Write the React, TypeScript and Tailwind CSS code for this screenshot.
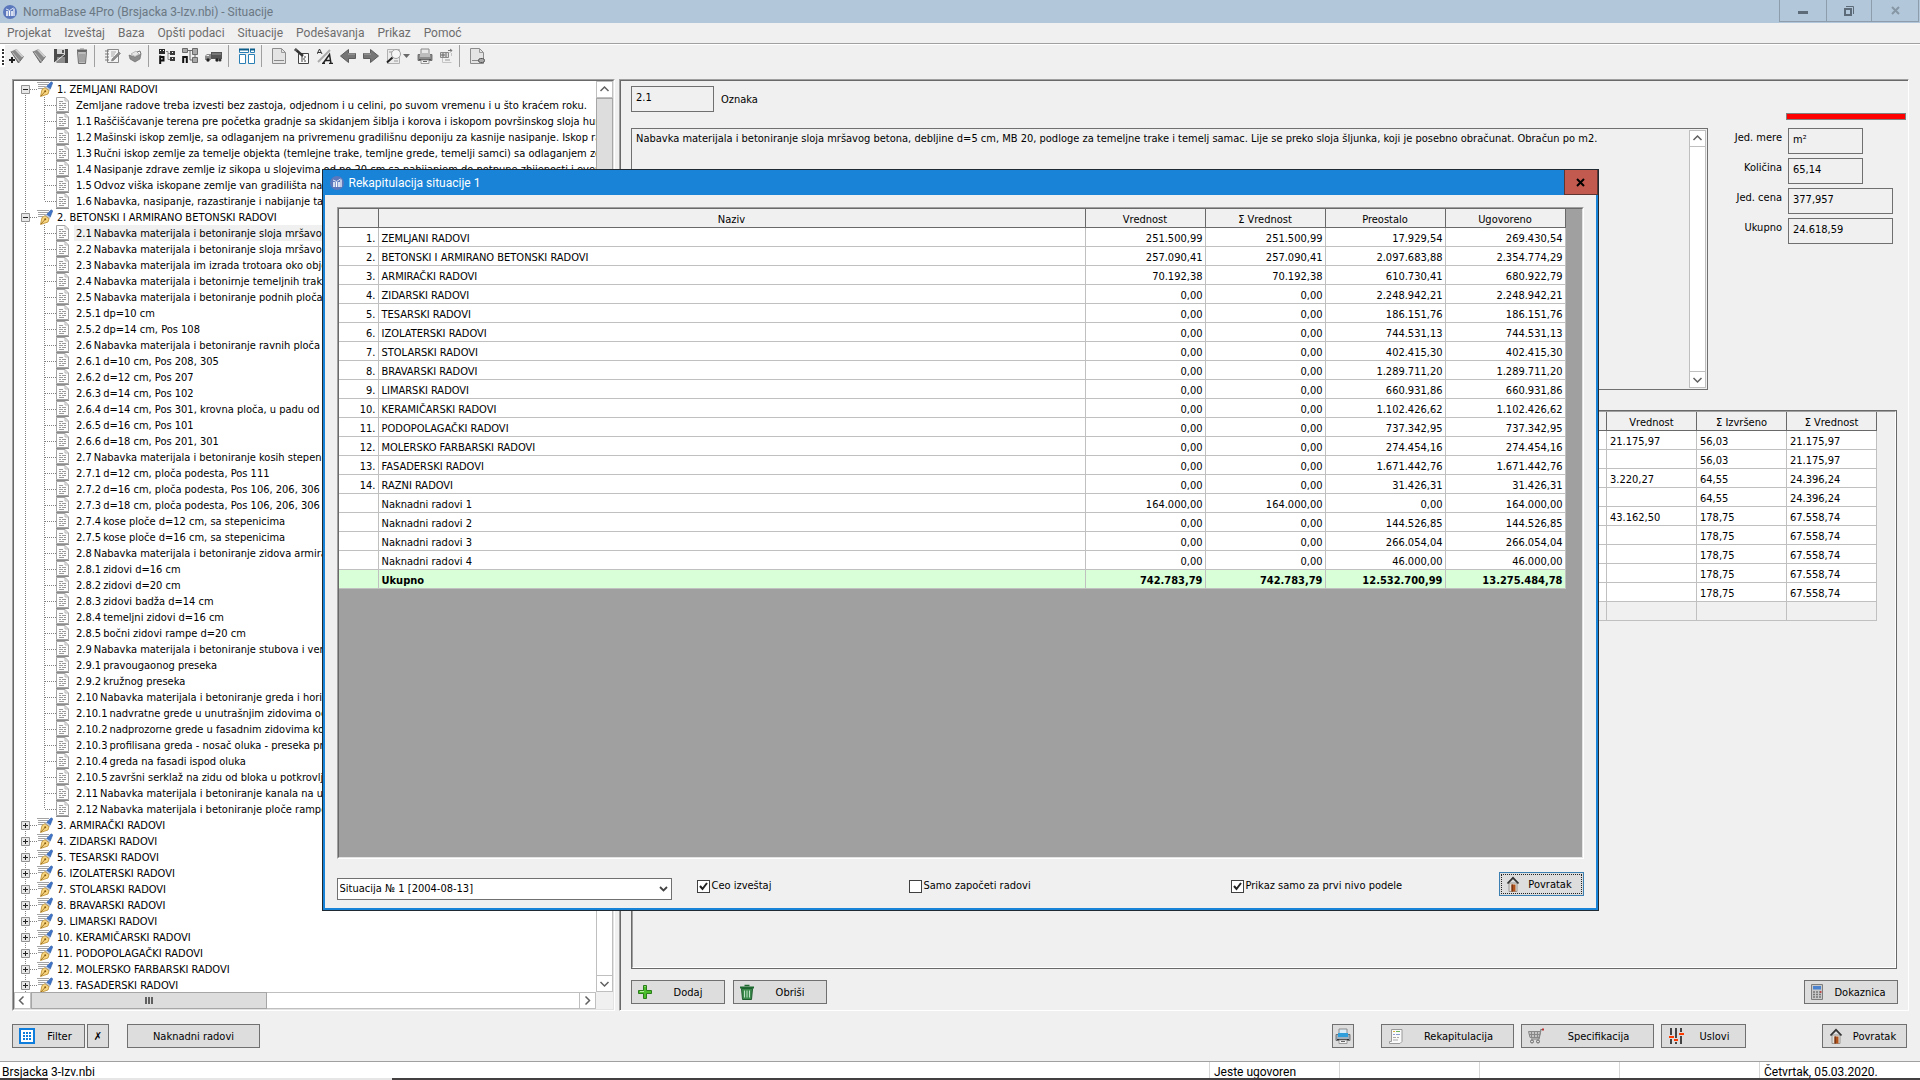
import type { ReactNode } from "react";
import clsx from "clsx";

type TreeBranch = {
  label: string;
  items?: string[];
};

const MENU = ["Projekat", "Izveštaj", "Baza", "Opšti podaci", "Situacije", "Podešavanja", "Prikaz", "Pomoć"];

const SELECTED = "2.1 Nabavka materijala i betoniranje sloja mršavog betona";

const TREE: TreeBranch[] = [
  {
    label: "1. ZEMLJANI RADOVI",
    items: [
      "Zemljane radove treba izvesti bez zastoja, odjednom i u celini, po suvom vremenu i u što kraćem roku.",
      "1.1 Raščišćavanje terena pre početka gradnje sa skidanjem šiblja i korova i iskopom površinskog sloja humusa",
      "1.2 Mašinski iskop zemlje, sa odlaganjem na privremenu gradilišnu deponiju za kasnije nasipanje. Iskop raditi do",
      "1.3 Ručni iskop zemlje za temelje objekta (temlejne trake, temljne grede, temelji samci) sa odlaganjem zemlje",
      "1.4 Nasipanje zdrave zemlje iz sikopa u slojevima od po 20 cm sa nabijanjem do potpune zbijenosti i eventula",
      "1.5 Odvoz viška iskopane zemlje van gradilišta na g",
      "1.6 Nabavka, nasipanje, razastiranje i nabijanje tam",
    ],
  },
  {
    label: "2. BETONSKI I ARMIRANO BETONSKI RADOVI",
    items: [
      SELECTED,
      "2.2 Nabavka materijala i betoniranje sloja mršavog b",
      "2.3 Nabavka materijala im izrada trotoara oko objek",
      "2.4 Nabavka materijala i betonirnje temeljnih traka,",
      "2.5 Nabavka materijala i betoniranje podnih ploča n",
      "2.5.1 dp=10 cm",
      "2.5.2 dp=14 cm, Pos 108",
      "2.6 Nabavka materijala i betoniranje ravnih ploča ar",
      "2.6.1 d=10 cm, Pos 208, 305",
      "2.6.2 d=12 cm, Pos 207",
      "2.6.3 d=14 cm, Pos 102",
      "2.6.4 d=14 cm, Pos 301, krovna ploča, u padu od 1",
      "2.6.5 d=16 cm, Pos 101",
      "2.6.6 d=18 cm, Pos 201, 301",
      "2.7 Nabavka materijala i betoniranje kosih stepenišn",
      "2.7.1 d=12 cm, ploča podesta, Pos 111",
      "2.7.2 d=16 cm, ploča podesta, Pos 106, 206, 306",
      "2.7.3 d=18 cm, ploča podesta, Pos 106, 206, 306",
      "2.7.4 kose ploče d=12 cm, sa stepenicima",
      "2.7.5 kose ploče d=16 cm, sa stepenicima",
      "2.8 Nabavka materijala i betoniranje zidova armiran",
      "2.8.1 zidovi d=16 cm",
      "2.8.2 zidovi d=20 cm",
      "2.8.3 zidovi badža d=14 cm",
      "2.8.4 temeljni zidovi d=16 cm",
      "2.8.5 bočni zidovi rampe d=20 cm",
      "2.9 Nabavka materijala i betoniranje stubova i verti",
      "2.9.1 pravougaonog preseka",
      "2.9.2 kružnog preseka",
      "2.10 Nabavka materijala i betoniranje greda i horizo",
      "2.10.1 nadvratne grede u unutrašnjim zidovima od",
      "2.10.2 nadprozorne grede u fasadnim zidovima koje",
      "2.10.3 profilisana greda - nosač oluka - preseka pre",
      "2.10.4 greda na fasadi ispod oluka",
      "2.10.5 završni serklaž na zidu od bloka u potkrovlju",
      "2.11 Nabavka materijala i betoniranje kanala na ula",
      "2.12 Nabavka materijala i betoniranje ploče rampe a",
    ],
  },
  { label: "3. ARMIRAČKI RADOVI" },
  { label: "4. ZIDARSKI RADOVI" },
  { label: "5. TESARSKI RADOVI" },
  { label: "6. IZOLATERSKI RADOVI" },
  { label: "7. STOLARSKI RADOVI" },
  { label: "8. BRAVARSKI RADOVI" },
  { label: "9. LIMARSKI RADOVI" },
  { label: "10. KERAMIČARSKI RADOVI" },
  { label: "11. PODOPOLAGAČKI RADOVI" },
  { label: "12. MOLERSKO FARBARSKI RADOVI" },
  { label: "13. FASADERSKI RADOVI" },
];

const RECAP_ROWS = [
  ["1.", "ZEMLJANI RADOVI", "251.500,99", "251.500,99", "17.929,54", "269.430,54"],
  ["2.", "BETONSKI I ARMIRANO BETONSKI RADOVI", "257.090,41", "257.090,41", "2.097.683,88", "2.354.774,29"],
  ["3.", "ARMIRAČKI RADOVI", "70.192,38", "70.192,38", "610.730,41", "680.922,79"],
  ["4.", "ZIDARSKI RADOVI", "0,00", "0,00", "2.248.942,21", "2.248.942,21"],
  ["5.", "TESARSKI RADOVI", "0,00", "0,00", "186.151,76", "186.151,76"],
  ["6.", "IZOLATERSKI RADOVI", "0,00", "0,00", "744.531,13", "744.531,13"],
  ["7.", "STOLARSKI RADOVI", "0,00", "0,00", "402.415,30", "402.415,30"],
  ["8.", "BRAVARSKI RADOVI", "0,00", "0,00", "1.289.711,20", "1.289.711,20"],
  ["9.", "LIMARSKI RADOVI", "0,00", "0,00", "660.931,86", "660.931,86"],
  ["10.", "KERAMIČARSKI RADOVI", "0,00", "0,00", "1.102.426,62", "1.102.426,62"],
  ["11.", "PODOPOLAGAČKI RADOVI", "0,00", "0,00", "737.342,95", "737.342,95"],
  ["12.", "MOLERSKO FARBARSKI RADOVI", "0,00", "0,00", "274.454,16", "274.454,16"],
  ["13.", "FASADERSKI RADOVI", "0,00", "0,00", "1.671.442,76", "1.671.442,76"],
  ["14.", "RAZNI RADOVI", "0,00", "0,00", "31.426,31", "31.426,31"],
  ["", "Naknadni radovi 1", "164.000,00", "164.000,00", "0,00", "164.000,00"],
  ["", "Naknadni radovi 2", "0,00", "0,00", "144.526,85", "144.526,85"],
  ["", "Naknadni radovi 3", "0,00", "0,00", "266.054,04", "266.054,04"],
  ["", "Naknadni radovi 4", "0,00", "0,00", "46.000,00", "46.000,00"],
];

const RECAP_TOTAL = ["", "Ukupno", "742.783,79", "742.783,79", "12.532.700,99", "13.275.484,78"];

const DETAIL_ROWS = [
  ["21.175,97", "56,03", "21.175,97"],
  ["", "56,03", "21.175,97"],
  ["3.220,27", "64,55", "24.396,24"],
  ["", "64,55", "24.396,24"],
  ["43.162,50", "178,75", "67.558,74"],
  ["", "178,75", "67.558,74"],
  ["", "178,75", "67.558,74"],
  ["", "178,75", "67.558,74"],
  ["", "178,75", "67.558,74"],
  ["", "", ""],
];

const UI_FONT = "font-['DejaVu_Sans_Condensed','Noto_Sans',sans-serif]";
const TITLE_FONT = "font-['Roboto','Open_Sans',sans-serif]";
const SUNKEN =
  "border border-t-[#a0a0a0] border-l-[#a0a0a0] border-r-white border-b-white";
const SUNKEN_INNER =
  "border border-t-[#696969] border-l-[#696969] border-r-[#e3e3e3] border-b-[#e3e3e3]";
const HEAD_CELL = "border-r border-b border-[#696969] p-0 pt-[3px] leading-[15px] font-normal";
const BODY_CELL = "border-r border-b border-[#c0c0c0] p-0 pt-[3px] pr-0.5 pl-[3px] leading-[15px]";

/* ---------- icons ---------- */

function Svg({ w = 16, h = 16, children }: { w?: number; h?: number; children: ReactNode }) {
  return (
    <svg width={w} height={h} viewBox={`0 0 ${w} ${h}`} fill="none" className="block shrink-0" aria-hidden="true">
      {children}
    </svg>
  );
}

function AppIcon() {
  return (
    <Svg w={14} h={14}>
      <circle cx="7" cy="7" r="7" fill="#5b78bd" />
      <path d="M4 11V6M6.500 11V6M9 11V6" stroke="#fff" strokeWidth="1.500" />
      <path d="M11 11V3.500" stroke="#fff" strokeWidth="1.200" />
      <path d="M3 4l3.500 1.500 4-2.500" stroke="#dfe6f5" />
    </Svg>
  );
}

function BookIcon({ plus }: { plus?: boolean }) {
  return (
    <Svg w={15}>
      <path d="M2 3.500L7.500 1 14.500 8.500 9.500 15z" fill="#8a8a8a" />
      <path d="M7.500 1l7 7.500-1 1.500L6 2z" fill="#cfcfcf" />
      <path d="M2 3.500L9.500 15l5-6.500" stroke="#6a6a6a" />
      <path d="M3.500 4.500l7 9" stroke="#c2c2c2" />
      {plus && <path d="M3 9v6M0 12h6" stroke="#222" strokeWidth="2" />}
    </Svg>
  );
}

function SaveIcon() {
  return (
    <Svg>
      <path d="M1 1h14v14H1z" fill="#4b4b4b" />
      <path d="M4 1h8v5H4z" fill="#d5d5d5" />
      <path d="M4 9h8v6H4z" fill="#8c8c8c" />
      <path d="M1 15L12 6M1 15l3-1" stroke="#e8e8e8" />
      <path d="M9 2h2v3H9z" fill="#555" />
    </Svg>
  );
}

function BinIcon() {
  return (
    <Svg w={12}>
      <path d="M1.500 3.500h9l-1 12h-7z" fill="#bdbdbd" stroke="#6e6e6e" />
      <path d="M1 2.500h10" stroke="#666" strokeWidth="2" />
      <path d="M4 1h4M4 6v8M6 6v8M8 6v8" stroke="#8a8a8a" />
    </Svg>
  );
}

function NotebookIcon() {
  return (
    <Svg>
      <path d="M2.500 1.500h11v13h-11z" fill="#f4f4f4" stroke="#8a8a8a" />
      <path d="M0 3h4M0 6h4M0 9h4M0 12h4" stroke="#777" />
      <path d="M6 4h5M6 6h4M6 8h3" stroke="#aaa" />
      <path d="M7 11l7-7 1.500 1.500-7 7-2 .5z" fill="#8c8c8c" stroke="#6a6a6a" strokeWidth=".5" />
    </Svg>
  );
}

function BoxIcon() {
  return (
    <Svg w={14}>
      <path d="M1 7l6 2 6-3-1 5-5 3-5-3z" fill="#8b8b8b" stroke="#666" strokeWidth=".6" />
      <path d="M3 6l5-3 3 3-4 2.500z" fill="#e6e6e6" stroke="#999" strokeWidth=".6" />
      <path d="M9 4l3-1 1 3" stroke="#777" />
    </Svg>
  );
}

function NodesIcon({ letter }: { letter: "p" | "n" }) {
  return (
    <Svg>
      {letter === "p" ? (
        <>
          <path d="M0 1h6v5H0z" fill="#2b2b2b" />
          <path d="M1 2h1v1H1zM4 2h1v1H4z" fill="#fff" />
          <path d="M7 3.500h2v8M9 5.500h2M9 11.500h2" stroke="#888" />
          <path d="M11 3h5v4h-5zM11 9h5v4h-5z" fill="#3a3a3a" />
          <path d="M13 4h1v1h-1zM13 10h1v1h-1z" fill="#fff" />
          <path d="M1.200 7.500V16M1 9h3.500v3.500H1" stroke="#111" strokeWidth="2" />
        </>
      ) : (
        <>
          <path d="M.5.500h5v4h-5zM10.500.500h5v6h-5zM10.500 9.500h5v5h-5z" fill="#a8a8a8" stroke="#6a6a6a" />
          <path d="M6 2.500h4M8 3v9h2M13 7v2" stroke="#666" />
          <path d="M1.200 15V9h3.600v6" stroke="#111" strokeWidth="2" />
        </>
      )}
    </Svg>
  );
}

function TruckIcon() {
  return (
    <Svg w={17}>
      <path d="M6 4h11v7H6z" fill="#555" />
      <path d="M7 5h9v2H7z" fill="#777" />
      <path d="M0 8l2-2h4v6H0z" fill="#8a8a8a" />
      <path d="M1 8h3V7H2z" fill="#eee" />
      <circle cx="3" cy="12" r="1.700" fill="#222" />
      <circle cx="12" cy="12" r="1.700" fill="#222" />
      <circle cx="15" cy="12" r="1.500" fill="#333" />
    </Svg>
  );
}

function LayoutIcon() {
  return (
    <Svg>
      <path d="M.5 6.500h6v9h-6zM9.500 6.500h6v9h-6z" fill="#fff" stroke="#2a7fb4" />
      <path d="M.5 1.500h9v3h-9zM11.500 1.500h4v3h-4z" fill="#fff" stroke="#2a7fb4" />
      <path d="M0 1.500h10M11 1.500h5" stroke="#0c5c8a" strokeWidth="2" />
    </Svg>
  );
}

function PageIcon({ badge }: { badge?: boolean }) {
  return (
    <Svg w={15}>
      <path d="M.5.500h9l4 4v11H.5z" fill="#e4e4e4" stroke="#8c8c8c" />
      <path d="M9.500.500v4h4" stroke="#999" />
      <path d="M2 12.500h10" stroke="#8a8a8a" />
      {badge && <rect x="8.500" y="10.500" width="6" height="4" rx="2" fill="#aaa" stroke="#555" />}
    </Svg>
  );
}

function WriteIcon() {
  return (
    <Svg>
      <path d="M4.500 5.500h10v10h-10z" fill="#fafafa" stroke="#444" />
      <path d="M1 1l8 7" stroke="#333" strokeWidth="2.500" />
      <path d="M0 2h3" stroke="#777" />
      <path d="M7 9h2M10 9h2M7 11h4M7 13h2M10 13h2" stroke="#444" />
    </Svg>
  );
}

function FontSwapIcon() {
  return (
    <Svg>
      <path d="M1 14L13 2" stroke="#aaa" strokeWidth="2" />
      <path d="M0 6l2.500-5L5 6M1 4.500h3" stroke="#333" />
      <path d="M6 15.500l6.500-9 1.500 9M8.500 12.500h5M5 15.500h3M12 15.500h4" stroke="#222" strokeWidth="1.500" />
    </Svg>
  );
}

function ArrowIcon({ right }: { right?: boolean }) {
  return (
    <Svg>
      <path
        d={right ? "M.5 5.500h7V1.500l8 6.500-8 6.500v-4h-7z" : "M15.500 5.500h-7V1.500L.5 8l8 6.500v-4h7z"}
        fill="#767676"
        stroke="#5c5c5c"
      />
      <path d={right ? "M1 6h7" : "M15 6H8"} stroke="#a8a8a8" />
    </Svg>
  );
}

function PreviewIcon() {
  return (
    <Svg w={24}>
      <path d="M1.500 1.500h12v14h-12z" fill="#ececec" stroke="#b0b0b0" />
      <circle cx="10" cy="6" r="4.500" fill="#f6f6f6" stroke="#a0a0a0" />
      <path d="M6.500 9.500L1 14.500" stroke="#222" strokeWidth="2" />
      <path d="M3 4h3M8 13h4" stroke="#999" />
      <path d="M17 6h7l-3.500 4z" fill="#6a6a6a" />
    </Svg>
  );
}

function PrinterIcon({ blue }: { blue?: boolean }) {
  return (
    <Svg>
      <path d="M4 1h8v6H4z" fill={blue ? "#d9edf9" : "#e9e9e9"} stroke="#8a8a8a" />
      <path d="M1 6.500h14v6H1z" fill={blue ? "#9fb1be" : "#8c8c8c"} stroke="#5f5f5f" strokeWidth=".8" />
      <path d="M3 5h10v4H3z" fill={blue ? "#2f9fdc" : "#bdbdbd"} />
      <path d="M2 11.500h12" stroke={blue ? "#333" : "#555"} />
      <path d="M4 12h8v3.500H4z" fill="#f4f4f4" stroke="#888" strokeWidth=".8" />
      <path d="M6 13.500h4" stroke="#666" />
    </Svg>
  );
}

function ExportIcon() {
  return (
    <Svg w={13}>
      <path d="M2.500 9v5.500h9M11.500 5v3" stroke="#c4c4c4" />
      <path d="M.5 4.500h8v5h-8z" fill="#ddd" stroke="#888" />
      <path d="M2 6h2v2H2zM5 6h2M5 8h2" stroke="#666" />
      <path d="M8 2.500h4M10 1l2 1.500-2 2" stroke="#777" />
      <path d="M5 12h5" stroke="#999" />
    </Svg>
  );
}

function PenIcon() {
  return (
    <Svg>
      <path d="M0 1.500h12M1 3.500h10M1 5.500h8M1 7.500h5" stroke="#a3a3a3" />
      <path d="M9.500 5.500L14 .8l1.800 1-2.500 6.200z" fill="#3f74c6" stroke="#2b579c" strokeWidth=".5" />
      <path d="M8.500 5l5 3.500-1 1.500-5-3.500z" fill="#b9c3d3" />
      <path d="M3.500 15.500l1.500-7 3-1.800 4 3-1 3.300z" fill="#f9d680" stroke="#b98a2b" strokeWidth=".8" />
      <path d="M4 15l4-4.500" stroke="#8a5d12" strokeWidth=".8" />
      <circle cx="8.200" cy="10.300" r="1" fill="#8a5d12" />
    </Svg>
  );
}

function DocIcon() {
  return (
    <Svg w={13}>
      <path d="M.5.500h8.500l3.500 3.500v10.500H.5z" fill="#fcfcfc" stroke="#a3a3a3" />
      <path d="M9 .5V4h3.500" stroke="#b5b5b5" />
      <path d="M0 15.500h13" stroke="#8c8c8c" />
      <path d="M3 4.500h4M3 6.500h2M6 6.500h4M3 8.500h4M8 8.500h2M3 10.500h2M6 10.500h4M3 12.500h5" stroke="#9a9a9a" />
    </Svg>
  );
}

function HomeIcon() {
  return (
    <Svg w={14}>
      <path d="M3 7h8v8.500H3z" fill="#e3e0dc" stroke="#8b8680" strokeWidth=".8" />
      <path d="M5.500 8.500h4v7h-4z" fill="#b2521b" />
      <path d="M5.500 8.500H7v7H5.500z" fill="#7a3a1a" />
      <path d="M1.500 7.500L7 1.800l5.500 5.700" stroke="#333" strokeWidth="1.800" />
    </Svg>
  );
}

function PlusIcon() {
  return (
    <Svg w={14}>
      <path d="M5.500 1.500h3V6.500h5v3h-5v5h-3v-5h-5v-3h5z" fill="#4cc02c" stroke="#2b7d1b" />
      <path d="M6.500 2.500h1M2 7.500h4" stroke="#b6f09e" />
    </Svg>
  );
}

function TrashIcon() {
  return (
    <Svg w={14}>
      <path d="M1.500 4.500h11l-1 11h-9z" fill="#3b8a4c" stroke="#1d5a2c" />
      <path d="M0 3.500h14" stroke="#1f6a31" strokeWidth="2" />
      <path d="M4.500 1.500h5" stroke="#1f6a31" strokeWidth="1.500" />
      <path d="M4.500 6.500v7M7 6.500v7M9.500 6.500v7" stroke="#bfe3c6" />
    </Svg>
  );
}

function FilterGridIcon() {
  return (
    <Svg>
      <path d="M1 1h14v14H1z" fill="#fff" stroke="#0f7ddb" strokeWidth="2" />
      <path d="M4 5h2M7 5h2M10 5h2M4 8h2M7 8h2M10 8h2M4 11h2M7 11h2M10 11h2" stroke="#0f7ddb" strokeWidth="2" />
    </Svg>
  );
}

function CalculatorIcon() {
  return (
    <Svg w={12}>
      <path d="M.5.500h11v15H.5z" fill="#c9c9c9" stroke="#7e7e7e" />
      <path d="M2 2h8v3.500H2z" fill="#4a82cf" />
      <path d="M2 8h8M2 10.500h8M2 13h8" stroke="#777" strokeWidth="1.500" strokeDasharray="2 1" />
      <path d="M9 7.200h1.500v1.500H9z" fill="#c33" />
    </Svg>
  );
}

function ScrollIcon() {
  return (
    <Svg>
      <path d="M3.500 1.500h10.500v12l-2 2H1.500v-2h2z" fill="#fafafa" stroke="#9a9a9a" />
      <path d="M5 3.500h2" stroke="#d9b13c" />
      <path d="M8 3.500h4" stroke="#6db35a" />
      <path d="M5 6.500h2M8 6.500h4" stroke="#8a9bd0" />
      <path d="M5 9.500h3M9 9.500h2M5 12h5" stroke="#aaa" />
    </Svg>
  );
}

function CartIcon() {
  return (
    <Svg>
      <path d="M15 1.500h-2L11 11H3" stroke="#777" strokeWidth="1.200" />
      <path d="M.5 3.500h12l-1.500 6H2z" fill="#c4c4c4" stroke="#888" />
      <path d="M3.500 4v5M6.500 4v5M9.500 4v5M1 6.500h11" stroke="#888" />
      <path d="M14 .5h2v2h-2z" fill="#b33" />
      <circle cx="4" cy="13.500" r="1.500" stroke="#666" />
      <circle cx="10" cy="13.500" r="1.500" stroke="#666" />
    </Svg>
  );
}

function SlidersIcon() {
  return (
    <Svg>
      <path d="M3 0v16M8 0v16M13 0v16" stroke="#444" strokeWidth="2" />
      <path d="M1 9h5M6 12h4M11 6h5" stroke="#ddd" strokeWidth="4" />
      <path d="M1 9h5M6 12h4M11 6h5" stroke="#ff3b00" strokeWidth="2" />
    </Svg>
  );
}

/* ---------- shared controls ---------- */

type ActionButtonProps = {
  icon?: ReactNode;
  className?: string;
  children?: ReactNode;
  label?: string;
};

function ActionButton({ icon, className, children, label }: ActionButtonProps) {
  return (
    <button
      type="button"
      aria-label={label}
      className={clsx(
        "flex h-6 shrink-0 items-center border border-[#707070] bg-[#dddddd] whitespace-nowrap",
        children && icon ? "pl-1.5" : "justify-center",
        className,
      )}
    >
      {icon}
      {children && <span className="flex-1 pt-0.5 text-center">{children}</span>}
    </button>
  );
}

const CHEVRONS = {
  up: "M4.500 9.500l4-4 4 4",
  down: "M4.500 6.500l4 4 4-4",
  left: "M9.500 4l-4 4 4 4",
  right: "M6.500 4l4 4-4 4",
};

function ScrollArrow({ dir }: { dir: keyof typeof CHEVRONS }) {
  return (
    <button
      type="button"
      aria-label={dir}
      className="flex size-[17px] shrink-0 items-center justify-center border border-[#bfbfbf] bg-white"
    >
      <Svg w={15} h={15}>
        <path d={CHEVRONS[dir]} transform="translate(-1 -.5)" stroke="#606060" strokeWidth="1.500" />
      </Svg>
    </button>
  );
}

function Check({ label, checked }: { label: string; checked?: boolean }) {
  return (
    <label className="flex items-center gap-0.5">
      <span className="relative size-[13px]">
        <input
          type="checkbox"
          defaultChecked={checked}
          className="peer block size-[13px] appearance-none border border-[#404040] bg-white"
        />
        <svg
          viewBox="0 0 13 13"
          className="pointer-events-none absolute inset-0 hidden size-[13px] peer-checked:block"
          fill="none"
        >
          <path d="M3 6l2.500 3 4.500-6" stroke="#222" strokeWidth="2" />
        </svg>
      </span>
      {label}
    </label>
  );
}

function Field({ id, label, value, wide }: { id: string; label: string; value: string; wide?: boolean }) {
  return (
    <div className="flex gap-1.5">
      <label htmlFor={id} className="w-[74px] pt-0.5 text-right">
        {label}
      </label>
      <input
        id={id}
        readOnly
        value={value}
        className={clsx("h-[26px] border border-[#707070] px-1 pb-1", wide ? "w-[105px]" : "w-[75px]")}
      />
    </div>
  );
}

/* ---------- main window ---------- */

function TitleBar() {
  return (
    <header className={clsx("flex h-[23px] shrink-0 items-center bg-[#b2c7d9] text-xs text-[#6b7884]", TITLE_FONT)}>
      <div className="flex flex-1 items-center gap-1.5 pl-[3px]">
        <AppIcon />
        <h1>NormaBase 4Pro (Brsjacka 3-Izv.nbi) - Situacije</h1>
      </div>
      <div className="mr-px flex h-[22px] self-start border border-t-0 border-[#8d9dac]">
        <button type="button" aria-label="Minimize" className="flex w-[46px] items-center justify-center">
          <Svg w={10} h={10}>
            <path d="M0 6.500h10" stroke="#5d6b78" strokeWidth="3" />
          </Svg>
        </button>
        <button
          type="button"
          aria-label="Restore"
          className="flex w-[46px] items-center justify-center border-x border-[#8d9dac]"
        >
          <Svg w={10} h={10}>
            <path d="M1 3h6v6H1z" stroke="#5d6b78" strokeWidth="2" />
            <path d="M2 .5h7.500V8" stroke="#5d6b78" />
          </Svg>
        </button>
        <button type="button" aria-label="Close" className="flex w-[46px] items-center justify-center">
          <Svg w={9} h={9}>
            <path d="M1 1l7 7M8 1L1 8" stroke="#8696a5" strokeWidth="2" />
          </Svg>
        </button>
      </div>
    </header>
  );
}

function MenuBar() {
  return (
    <nav
      className={clsx(
        "flex h-[21px] shrink-0 items-center gap-[13px] border-b border-[#a0a0a0] pl-[7px] text-xs text-[#6d6d6d]",
        TITLE_FONT,
      )}
    >
      {MENU.map((item) => (
        <button key={item} type="button">
          {item}
        </button>
      ))}
    </nav>
  );
}

function ToolGroup({ children, last }: { children: ReactNode; last?: boolean }) {
  return (
    <div className={clsx("flex h-full items-center gap-[7px] pr-1.5 pl-2.5", !last && "border-r border-[#a0a0a0]")}>
      {children}
    </div>
  );
}

function ToolBar() {
  return (
    <div className="flex h-[23px] shrink-0 items-center border-t border-white">
      <div className="h-full w-[5px] bg-white pt-1 pl-0.5">
        <div className="h-4 border-l-2 border-dotted border-[#333]" />
      </div>
      <div className="-ml-1.5 flex h-full">
        <ToolGroup>
          <BookIcon plus />
          <BookIcon />
          <SaveIcon />
          <BinIcon />
        </ToolGroup>
        <ToolGroup>
          <NotebookIcon />
          <BoxIcon />
        </ToolGroup>
        <ToolGroup>
          <NodesIcon letter="p" />
          <NodesIcon letter="n" />
          <TruckIcon />
        </ToolGroup>
        <ToolGroup>
          <LayoutIcon />
        </ToolGroup>
        <ToolGroup>
          <PageIcon />
          <WriteIcon />
          <FontSwapIcon />
          <ArrowIcon />
          <ArrowIcon right />
          <PreviewIcon />
          <PrinterIcon />
          <ExportIcon />
        </ToolGroup>
        <ToolGroup last>
          <PageIcon badge />
        </ToolGroup>
      </div>
    </div>
  );
}

const DOTS = { stroke: "#808080", strokeDasharray: "1 1" };

function BranchRow({ branch, first }: { branch: TreeBranch; first: boolean }) {
  return (
    <div className="flex h-4 items-center whitespace-nowrap">
      <Svg w={23}>
        <path d={first ? "M11.500 8v8" : "M11.500 0v16"} {...DOTS} />
        <path d="M16 8.500h7" {...DOTS} />
        <path d="M7.500 4.500h8v8h-8z" fill="#e8e8e8" stroke="#919191" />
        <path d={branch.items ? "M9 8.500h5" : "M9 8.500h5M11.500 6v5"} stroke="#222" />
      </Svg>
      <PenIcon />
      <span className="pt-0.5 pl-1">{branch.label}</span>
    </div>
  );
}

function LeafRow({ item, last }: { item: string; last: boolean }) {
  const [, code, text] = item.match(/^([\d.]+)? ?(.*)$/)!;

  return (
    <div className="flex h-4 items-center whitespace-nowrap">
      <Svg w={42}>
        <path d="M11.500 0v16" {...DOTS} />
        <path d={last ? "M30.500 0v8" : "M30.500 0v16"} {...DOTS} />
        <path d="M31 8.500h11" {...DOTS} />
      </Svg>
      <DocIcon />
      <span className={clsx("ml-[5px] flex h-4 gap-0.5 px-0.5 pt-px", item === SELECTED && "bg-[#f0f0f0]")}>
        {code && <span>{code}</span>}
        <span>{text}</span>
      </span>
    </div>
  );
}

function TreePanel() {
  return (
    <aside className={clsx("w-[603px] shrink-0", SUNKEN)}>
      <div className={clsx("flex h-full flex-col bg-[#f0f0f0]", SUNKEN_INNER)}>
        <div className="flex min-h-0 flex-1">
          <div className="min-w-0 flex-1 overflow-hidden bg-white">
            {TREE.map((branch, i) => (
              <div key={branch.label}>
                <BranchRow branch={branch} first={i === 0} />
                {branch.items?.map((item, j) => (
                  <LeafRow key={item} item={item} last={j === branch.items!.length - 1} />
                ))}
              </div>
            ))}
          </div>
          <div className="flex w-[17px] flex-col border-x border-[#bfbfbf] bg-white">
            <div className="-mx-px">
              <ScrollArrow dir="up" />
            </div>
            <div className="-mx-px h-[480px] border border-[#a6a6a6] bg-[#dddddd]" />
            <div className="-mx-px mt-auto">
              <ScrollArrow dir="down" />
            </div>
          </div>
        </div>
        <div className="mr-[17px] flex h-[17px] bg-white">
          <ScrollArrow dir="left" />
          <div className="flex w-[236px] items-center justify-center gap-px border border-[#a6a6a6] bg-[#dddddd]">
            <i className="h-[7px] w-0.5 bg-[#606060]" />
            <i className="h-[7px] w-0.5 bg-[#606060]" />
            <i className="h-[7px] w-0.5 bg-[#606060]" />
          </div>
          <div className="flex-1 border-y border-[#bfbfbf]" />
          <ScrollArrow dir="right" />
        </div>
      </div>
    </aside>
  );
}

function DetailTable() {
  return (
    <table className="w-[1244px] table-fixed border-separate border-spacing-0">
      <colgroup>
        <col />
        <col className="w-[90px]" />
        <col className="w-[90px]" />
        <col className="w-[90px]" />
      </colgroup>
      <thead>
        <tr className="h-[19px]">
          {["", "Vrednost", "Σ Izvršeno", "Σ Vrednost"].map((head, i) => (
            <th key={i} className={HEAD_CELL}>
              {head}
            </th>
          ))}
        </tr>
      </thead>
      <tbody>
        {DETAIL_ROWS.map((row, i) => (
          <tr key={i} className={clsx("h-[19px]", i < DETAIL_ROWS.length - 1 && "bg-white")}>
            <td className={BODY_CELL} />
            {row.map((cell, j) => (
              <td key={j} className={BODY_CELL}>
                {cell}
              </td>
            ))}
          </tr>
        ))}
      </tbody>
    </table>
  );
}

function ItemPanel() {
  return (
    <section className={clsx("min-w-0 flex-1", SUNKEN)}>
      <div className="flex h-full flex-col border-t border-l border-[#696969] pb-1.5 pl-2.5">
        <div className="flex h-[309px]">
          <div className="flex min-w-0 flex-1 flex-col gap-4 pt-[5px]">
            <div className="flex items-center gap-[7px]">
              <input
                id="oznaka"
                readOnly
                value="2.1"
                className="h-[26px] w-[83px] border border-[#707070] px-1 pb-1"
              />
              <label htmlFor="oznaka" className="pt-0.5">
                Oznaka
              </label>
            </div>
            <div className="flex min-h-0 flex-1 border border-[#707070] p-px">
              <textarea
                readOnly
                aria-label="Opis"
                className="min-w-0 flex-1 resize-none overflow-hidden px-[3px] pt-px"
                value="Nabavka materijala i betoniranje sloja mršavog betona, debljine d=5 cm, MB 20, podloge za temeljne trake i temelj samac. Lije se preko sloja šljunka, koji je posebno obračunat. Obračun po m2."
              />
              <div className="flex w-[17px] flex-col justify-between border border-[#bfbfbf] bg-white">
                <div className="-m-px">
                  <ScrollArrow dir="up" />
                </div>
                <div className="-m-px">
                  <ScrollArrow dir="down" />
                </div>
              </div>
            </div>
          </div>
          <div className="flex w-[200px] shrink-0 flex-col pt-8">
            <div className="mr-0.5 mb-2 h-[7px] w-[120px] self-end border border-[#808080] bg-[#ff0000]" />
            <div className="flex flex-col gap-1">
              <Field id="jm" label="Jed. mere" value="m²" />
              <Field id="kol" label="Količina" value="65,14" />
              <Field id="cena" label="Jed. cena" value="377,957" wide />
              <Field id="ukupno" label="Ukupno" value="24.618,59" wide />
            </div>
          </div>
        </div>
        <div className="mt-5 mr-[11px] min-h-0 flex-1 overflow-hidden border border-[#696969]">
          <div className={clsx("h-full", SUNKEN)}>
            <DetailTable />
          </div>
        </div>
        <div className="mt-[11px] mr-2.5 flex gap-2">
          <ActionButton icon={<PlusIcon />} className="w-[94px]">
            Dodaj
          </ActionButton>
          <ActionButton icon={<TrashIcon />} className="w-[94px]">
            Obriši
          </ActionButton>
          <ActionButton icon={<CalculatorIcon />} className="ml-auto w-[94px]">
            Dokaznica
          </ActionButton>
        </div>
      </div>
    </section>
  );
}

function FooterActions() {
  return (
    <div className="flex shrink-0 py-[13px] pr-[13px] pl-3">
      <ActionButton icon={<FilterGridIcon />} className="w-[73px]">
        Filter
      </ActionButton>
      <ActionButton className="ml-0.5 w-[22px]">✗</ActionButton>
      <ActionButton className="ml-[18px] w-[133px]">Naknadni radovi</ActionButton>
      <div className="ml-auto flex gap-[7px]">
        <ActionButton icon={<PrinterIcon blue />} label="Štampa" className="mr-5 w-[22px]" />
        <ActionButton icon={<ScrollIcon />} className="w-[133px]">
          Rekapitulacija
        </ActionButton>
        <ActionButton icon={<CartIcon />} className="w-[133px]">
          Specifikacija
        </ActionButton>
        <ActionButton icon={<SlidersIcon />} className="w-[85px]">
          Uslovi
        </ActionButton>
        <ActionButton icon={<HomeIcon />} className="ml-[69px] w-[85px]">
          Povratak
        </ActionButton>
      </div>
    </div>
  );
}

function StatusBar() {
  return (
    <footer className={clsx("shrink-0 text-xs text-black", TITLE_FONT)}>
      <div className="flex h-[17px] border-t border-[#a0a0a0] bg-white leading-5">
        <div className="flex-1 pl-0.5">Brsjacka 3-Izv.nbi</div>
        <div className="w-[130px] border-l border-[#d7d7d7] pl-1">Jeste ugovoren</div>
        <div className="w-[140px] border-l border-[#d7d7d7]" />
        <div className="w-[140px] border-l border-[#d7d7d7]" />
        <div className="w-[140px] border-l border-[#d7d7d7]" />
        <div className="w-[161px] border-l border-[#d7d7d7] pl-1">Četvrtak, 05.03.2020.</div>
      </div>
      <div className="flex h-0.5">
        <div className="w-12 bg-[#444041]" />
        <div className="w-[344px] bg-[#e6e6e6]" />
        <div className="flex-1 bg-[#444041]" />
      </div>
    </footer>
  );
}

/* ---------- recapitulation dialog ---------- */

function RecapTable() {
  return (
    <table className="w-[1227px] table-fixed border-separate border-spacing-0">
      <colgroup>
        <col className="w-10" />
        <col />
        <col className="w-[120px]" />
        <col className="w-[120px]" />
        <col className="w-[120px]" />
        <col className="w-[120px]" />
      </colgroup>
      <thead>
        <tr className="h-[19px] bg-[#f0f0f0]">
          {["", "Naziv", "Vrednost", "Σ Vrednost", "Preostalo", "Ugovoreno"].map((head, i) => (
            <th key={i} className={HEAD_CELL}>
              {head}
            </th>
          ))}
        </tr>
      </thead>
      <tbody>
        {[...RECAP_ROWS, RECAP_TOTAL].map((row, i) => (
          <tr key={i} className={clsx("h-[19px]", row === RECAP_TOTAL ? "bg-[#d8ffd8] font-bold" : "bg-white")}>
            {row.map((cell, j) => (
              <td key={j} className={clsx(BODY_CELL, j === 1 ? "text-left" : "text-right")}>
                {cell}
              </td>
            ))}
          </tr>
        ))}
      </tbody>
    </table>
  );
}

function RecapDialog() {
  return (
    <div className="fixed inset-0 flex items-center justify-center">
      <div
        role="dialog"
        aria-label="Rekapitulacija situacije 1"
        className="flex h-[742px] w-[1277px] flex-col border border-[#1f2a33] bg-[#1883d7]"
      >
        <div className={clsx("flex h-[25px] shrink-0 items-center pl-[7px] text-xs text-white", TITLE_FONT)}>
          <AppIcon />
          <h2 className="flex-1 pl-[5px]">Rekapitulacija situacije 1</h2>
          <button
            type="button"
            aria-label="Close"
            className="flex h-[25px] w-[34px] items-center justify-center border border-t-0 border-[#5e3530] bg-[#c35a50]"
          >
            <Svg w={9} h={9}>
              <path d="M1 1l7 7M8 1L1 8" stroke="#000" strokeWidth="2" />
            </Svg>
          </button>
        </div>
        <div className="mx-0.5 mb-0.5 flex min-h-0 flex-1 flex-col bg-[#f0f0f0] px-3 pt-3">
          <div className={clsx("h-[652px] shrink-0", SUNKEN)}>
            <div className={clsx("h-full bg-[#a0a0a0]", SUNKEN_INNER)}>
              <RecapTable />
            </div>
          </div>
          <div className="flex pt-[13px]">
            <div className="grid flex-1 grid-cols-[360px_212px_322px_1fr] pt-1.5">
              <div className="relative h-[22px] w-[335px]">
                <select
                  aria-label="Situacija"
                  className="h-full w-full appearance-none border border-[#707070] bg-white pl-0.5"
                >
                  <option>Situacija № 1 [2004-08-13]</option>
                </select>
                <svg
                  viewBox="0 0 9 6"
                  fill="none"
                  className="pointer-events-none absolute top-2 right-1 h-1.5 w-[9px]"
                >
                  <path d="M1 1l3.500 3.500L8 1" stroke="#444" strokeWidth="1.800" />
                </svg>
              </div>
              <div>
                <Check label="Ceo izveštaj" checked />
              </div>
              <div>
                <Check label="Samo započeti radovi" />
              </div>
              <div>
                <Check label="Prikaz samo za prvi nivo podele" checked />
              </div>
            </div>
            <button
              type="button"
              className="h-6 w-[85px] border border-[#3c7fb1] bg-[#dddddd] p-px whitespace-nowrap"
            >
              <span className="flex h-full items-center border border-dotted border-[#222] pl-1">
                <HomeIcon />
                <span className="flex-1 pt-0.5 text-center">Povratak</span>
              </span>
            </button>
          </div>
        </div>
      </div>
    </div>
  );
}

export default function App() {
  return (
    <div className={clsx("flex h-screen w-full flex-col bg-[#f0f0f0] text-[11px] leading-4 text-black", UI_FONT)}>
      <TitleBar />
      <MenuBar />
      <ToolBar />
      <main className="flex min-h-0 flex-1 gap-1 pt-3 pr-[11px] pl-3">
        <TreePanel />
        <ItemPanel />
      </main>
      <FooterActions />
      <StatusBar />
      <RecapDialog />
    </div>
  );
}
